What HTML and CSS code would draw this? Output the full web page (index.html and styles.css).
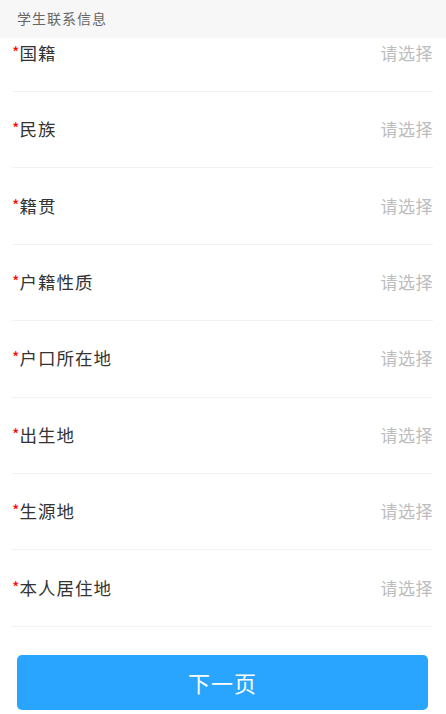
FILE: index.html
```html
<!DOCTYPE html>
<html lang="zh-CN">

<head>
    <meta charset="UTF-8">
    <meta name="viewport" content="width=device-width, initial-scale=1.0">
    <title>学生联系信息</title>
    <link rel="stylesheet" href="styles.css">
</head>

<body>

    <div id="page">
        <div class="title-bar">学生联系信息</div>

        <ul class="form-list">
            <li class="form-row">
                <span class="label"><i>*</i>国籍</span>
                <span class="pick">请选择</span>
            </li>
            <li class="form-row">
                <span class="label"><i>*</i>民族</span>
                <span class="pick">请选择</span>
            </li>
            <li class="form-row">
                <span class="label"><i>*</i>籍贯</span>
                <span class="pick">请选择</span>
            </li>
            <li class="form-row">
                <span class="label"><i>*</i>户籍性质</span>
                <span class="pick">请选择</span>
            </li>
            <li class="form-row">
                <span class="label"><i>*</i>户口所在地</span>
                <span class="pick">请选择</span>
            </li>
            <li class="form-row">
                <span class="label"><i>*</i>出生地</span>
                <span class="pick">请选择</span>
            </li>
            <li class="form-row">
                <span class="label"><i>*</i>生源地</span>
                <span class="pick">请选择</span>
            </li>
            <li class="form-row">
                <span class="label"><i>*</i>本人居住地</span>
                <span class="pick">请选择</span>
            </li>
        </ul>

        <div class="btn-next">下一页</div>
    </div>

</body>

</html>
```

FILE: styles.css
```css
* {
    margin: 0;
    padding: 0;
}

ul {
    list-style: none;
}

body {
    font-family: "Noto Sans CJK SC", "Noto Sans", sans-serif;
    background: #fff;
}

#page {
    position: relative;
    width: 446px;
    height: 714px;
    overflow: hidden;
}

/* 顶部标题，盖在滚动内容上面 */
.title-bar {
    position: absolute;
    top: 0;
    left: 0;
    right: 0;
    z-index: 2;
    height: 38px;
    padding-left: 17px;
    background: #f7f7f7;
    line-height: 36px;
    font-size: 14px;
    letter-spacing: 1px;
    color: #666;
}

.form-list {
    padding: 15.6px 13px 0 12px;
}

.form-row {
    display: flex;
    justify-content: space-between;
    align-items: center;
    box-sizing: border-box;
    height: 76.4px;
    padding-bottom: 2px;
    border-bottom: 1px solid #f2f2f2;
}

.label {
    font-size: 17.5px;
    letter-spacing: 1px;
    color: #333;
}

.label i {
    font-style: normal;
    font-size: 16px;
    letter-spacing: 0;
    color: #f00;
    vertical-align: 1px;
}

.pick {
    font-size: 17px;
    letter-spacing: 0.5px;
    color: #bdbdbd;
}

.btn-next {
    margin: 28px 18px 0 17px;
    height: 55px;
    background: #29a5ff;
    border-radius: 5px;
    line-height: 55px;
    text-align: center;
    font-size: 22px;
    letter-spacing: 1px;
    color: #fff;
}
```
